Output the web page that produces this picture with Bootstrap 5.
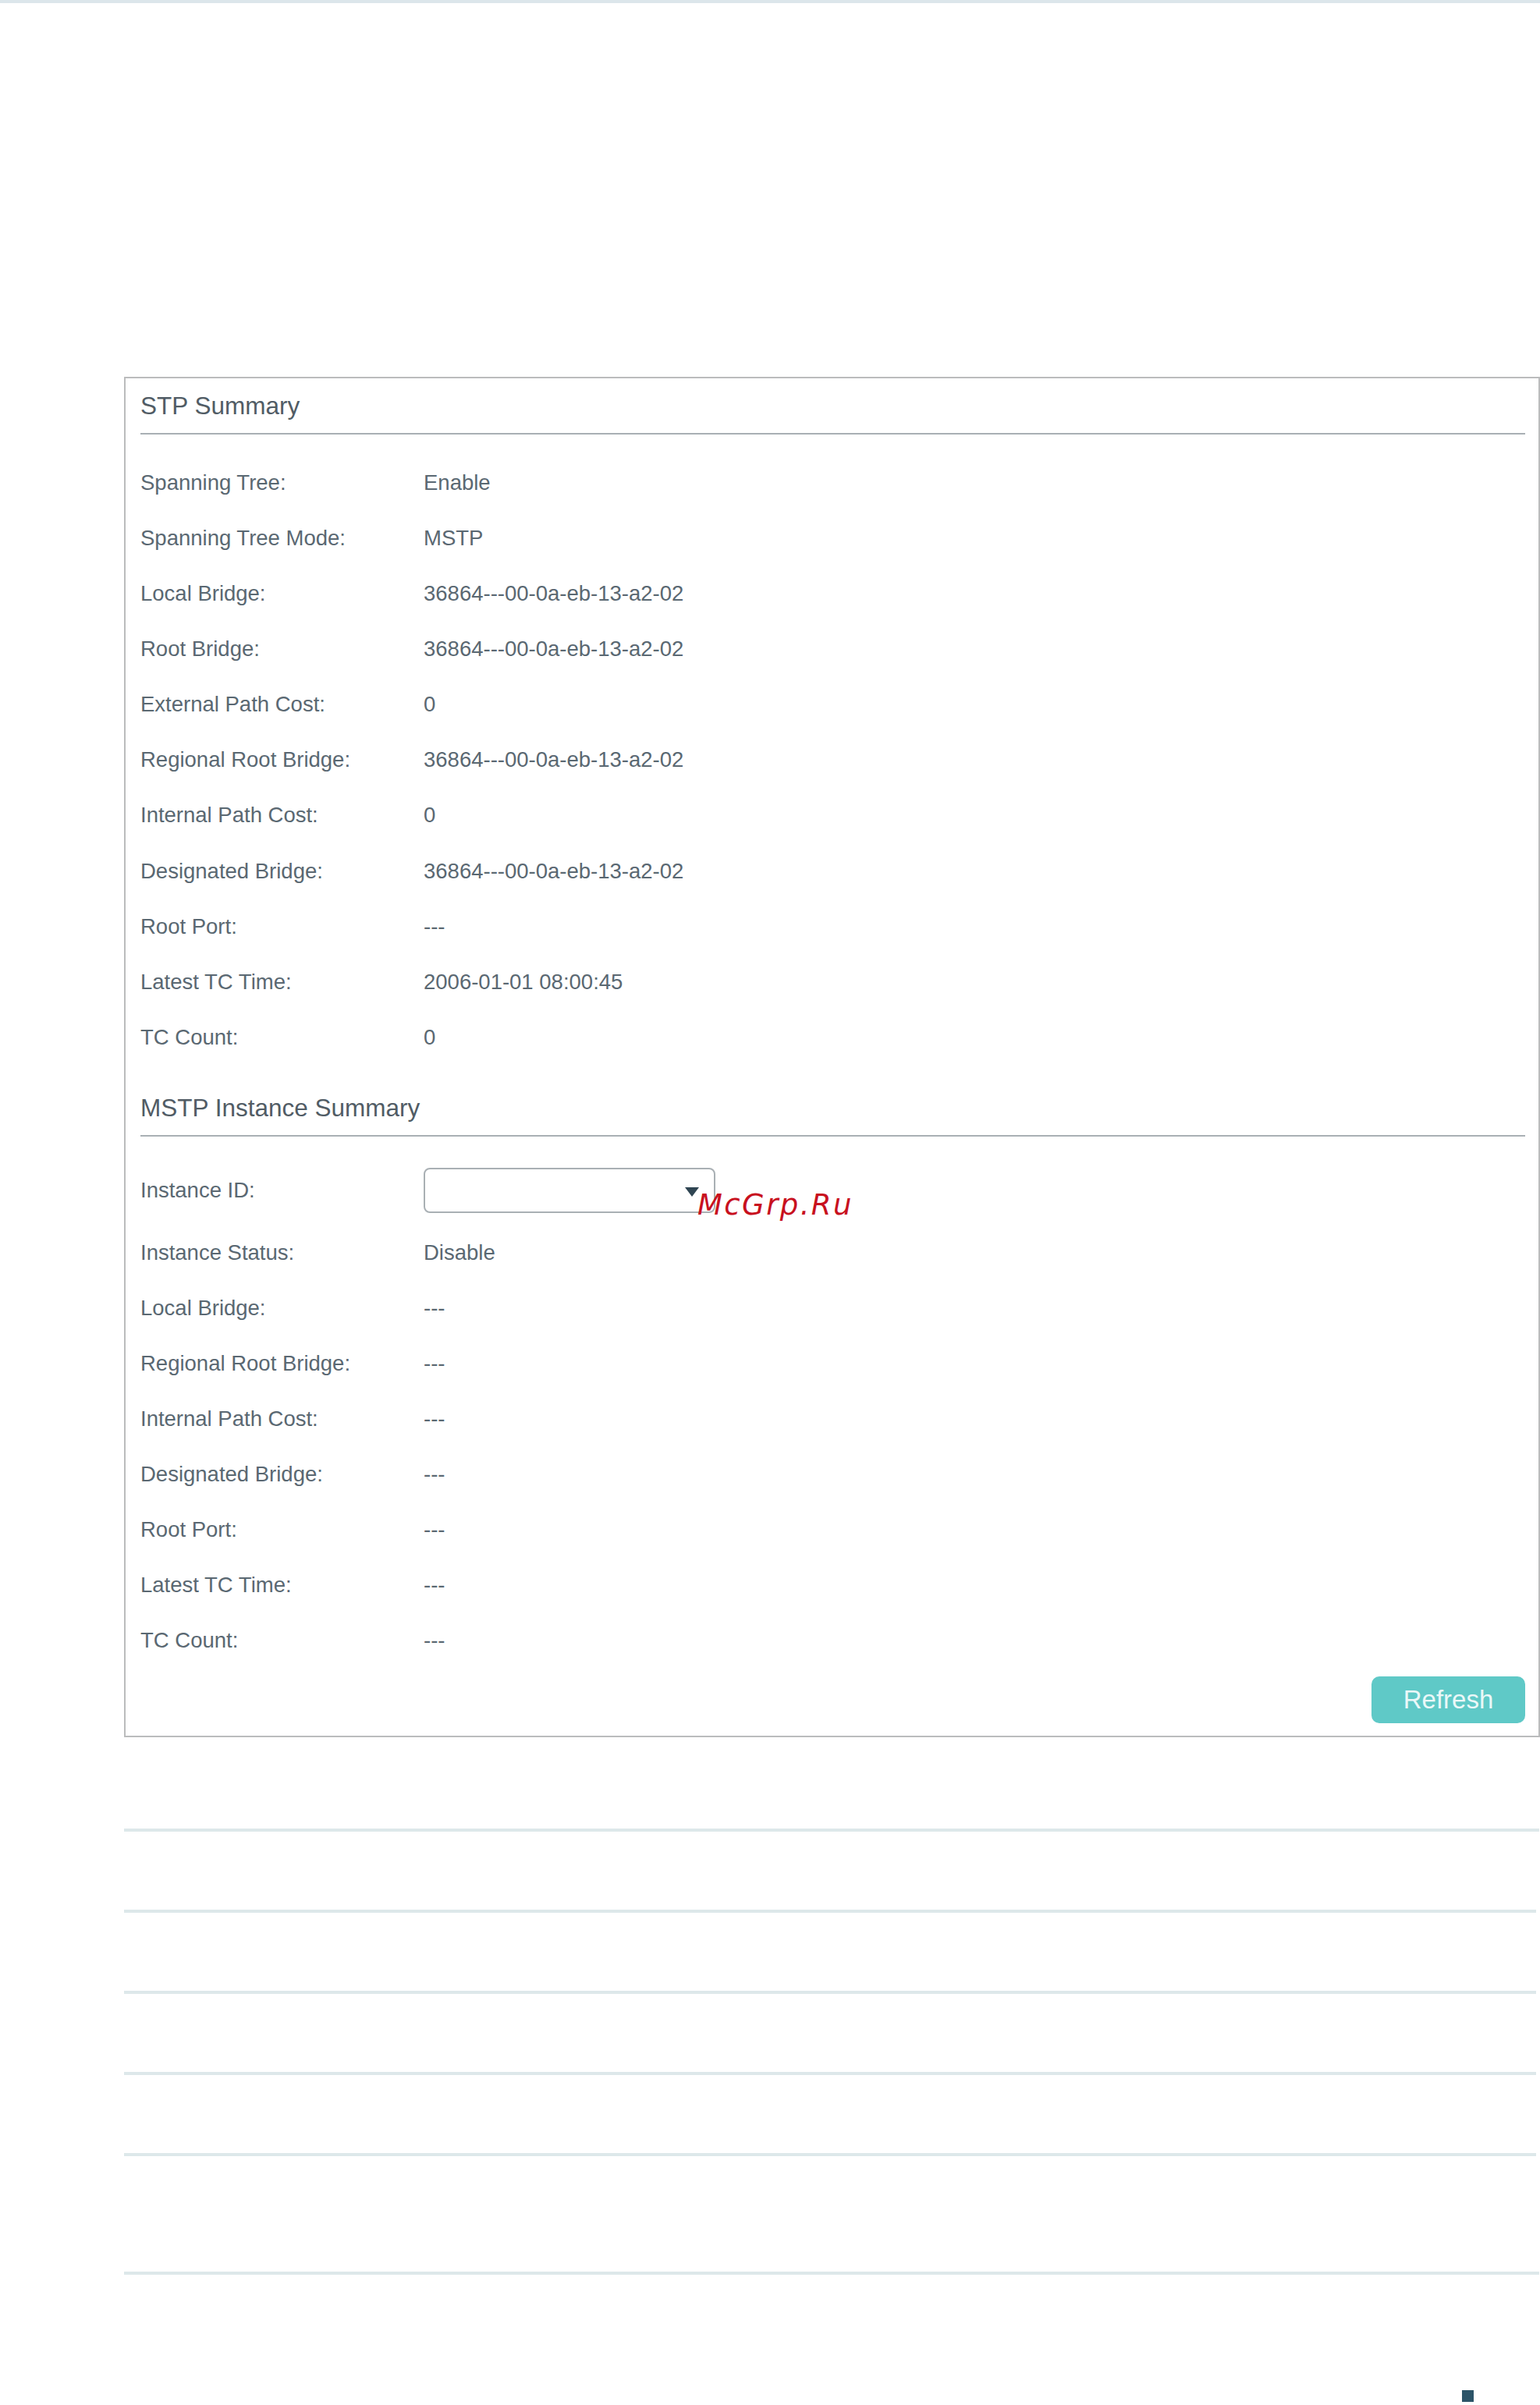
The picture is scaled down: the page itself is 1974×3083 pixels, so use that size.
<!DOCTYPE html>
<html lang="en">
<head>
  <meta charset="UTF-8" />
  <title>STP Summary</title>
  <link href="https://cdn.jsdelivr.net/npm/bootstrap@5.3.3/dist/css/bootstrap.min.css" rel="stylesheet"/>
  <style>
    body { background: #fff; font-family: "Liberation Sans", Arial, sans-serif; color: #5a6872; }
    .top-rule { height: 4px; background: #dce6eb; }
    .page-body { margin-left: 159px; padding-top: 479px; }
    .stp-panel { border: 2px solid #bbbcbd; height: 1744px; padding: 0 17px 0 19px; }
    .section-title {
      font-size: 31.5px; color: #515c65; border-bottom: 2px solid #a9b0b4;
      height: 72px; line-height: 70px;
    }
    .info-rows { padding-top: 26px; }
    .info-row { height: 71px; font-size: 27.5px; }
    .info-rows .info-row { height: 71.1px; }
    .info-label { width: 363px; }
    .second-title { margin-top: 20px; }
    .select-row { height: 58px; margin-top: 40px; margin-bottom: 15px; font-size: 27.5px; }
    .select-wrap { width: 374px; height: 58px; }
    .select-wrap .form-select {
      height: 100%; background-image: none; border: 2px solid #a9b0b4; border-radius: 8px;
    }
    .select-arrow { position: absolute; right: 21px; top: 25px; width: 18px; height: 12px; pointer-events: none; }
    .watermark {
      position: absolute; left: 894px; top: 1520px; font-family: "DejaVu Sans", sans-serif;
      font-style: italic; font-size: 37px; line-height: 50px; letter-spacing: 2.4px; color: #c8101e;
    }
    .btn-refresh {
      width: 197px; height: 60px; padding: 0; font-size: 33px; line-height: 60px; border: 0; border-radius: 10px;
      background: #5fc9c7; color: #eaf8f8;
    }
    .btn-refresh:hover { background: #5fc9c7; color: #eaf8f8; }
    .refresh-row { margin-top: 11px; }
    .foot-rules { margin-top: 117px; gap: 100px; }
    .foot-rule { height: 4px; background: #dde8ea; margin-right: 5px; }
    .foot-rule.wide { margin-right: 1px; }
    .foot-rule.last { margin-top: 48px; }
    .page-mark { width: 15px; height: 15px; background: #2c5468; margin: 148px 0 0 1715px; }
  </style>
</head>
<body>
<div class="top-rule"></div>
<div class="page-body">
  <div class="stp-panel">
    <div class="section-title">STP Summary</div>
    <div class="info-rows">
      <div class="info-row d-flex align-items-center"><div class="info-label">Spanning Tree:</div><div>Enable</div></div>
      <div class="info-row d-flex align-items-center"><div class="info-label">Spanning Tree Mode:</div><div>MSTP</div></div>
      <div class="info-row d-flex align-items-center"><div class="info-label">Local Bridge:</div><div>36864---00-0a-eb-13-a2-02</div></div>
      <div class="info-row d-flex align-items-center"><div class="info-label">Root Bridge:</div><div>36864---00-0a-eb-13-a2-02</div></div>
      <div class="info-row d-flex align-items-center"><div class="info-label">External Path Cost:</div><div>0</div></div>
      <div class="info-row d-flex align-items-center"><div class="info-label">Regional Root Bridge:</div><div>36864---00-0a-eb-13-a2-02</div></div>
      <div class="info-row d-flex align-items-center"><div class="info-label">Internal Path Cost:</div><div>0</div></div>
      <div class="info-row d-flex align-items-center"><div class="info-label">Designated Bridge:</div><div>36864---00-0a-eb-13-a2-02</div></div>
      <div class="info-row d-flex align-items-center"><div class="info-label">Root Port:</div><div>---</div></div>
      <div class="info-row d-flex align-items-center"><div class="info-label">Latest TC Time:</div><div>2006-01-01 08:00:45</div></div>
      <div class="info-row d-flex align-items-center"><div class="info-label">TC Count:</div><div>0</div></div>
    </div>
    <div class="section-title second-title">MSTP Instance Summary</div>
    <div class="select-row d-flex align-items-center">
      <div class="info-label">Instance ID:</div>
      <div class="select-wrap position-relative">
        <select class="form-select" aria-label="Instance ID"></select>
        <svg class="select-arrow" viewBox="0 0 18 12"><path d="M0 0h18L9 12z" fill="#2f4552"/></svg>
      </div>
    </div>
    <div class="info-row d-flex align-items-center"><div class="info-label">Instance Status:</div><div>Disable</div></div>
    <div class="info-row d-flex align-items-center"><div class="info-label">Local Bridge:</div><div>---</div></div>
    <div class="info-row d-flex align-items-center"><div class="info-label">Regional Root Bridge:</div><div>---</div></div>
    <div class="info-row d-flex align-items-center"><div class="info-label">Internal Path Cost:</div><div>---</div></div>
    <div class="info-row d-flex align-items-center"><div class="info-label">Designated Bridge:</div><div>---</div></div>
    <div class="info-row d-flex align-items-center"><div class="info-label">Root Port:</div><div>---</div></div>
    <div class="info-row d-flex align-items-center"><div class="info-label">Latest TC Time:</div><div>---</div></div>
    <div class="info-row d-flex align-items-center"><div class="info-label">TC Count:</div><div>---</div></div>
    <div class="refresh-row d-flex justify-content-end">
      <button type="button" class="btn btn-refresh">Refresh</button>
    </div>
  </div>
  <div class="foot-rules d-flex flex-column">
    <div class="foot-rule wide"></div>
    <div class="foot-rule"></div>
    <div class="foot-rule"></div>
    <div class="foot-rule"></div>
    <div class="foot-rule"></div>
    <div class="foot-rule wide last"></div>
  </div>
  <div class="page-mark"></div>
</div>
<div class="watermark">McGrp.Ru</div>
</body>
</html>
